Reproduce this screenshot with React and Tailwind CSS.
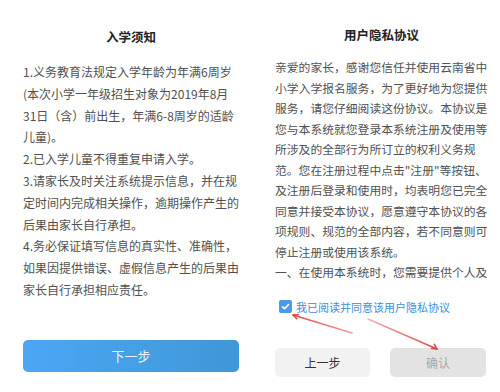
import React from "react";

const notice = [
  ["1.义务教育法规定入学年龄为年满6周岁", "(本次小学一年级招生对象为2019年8月", "31日（含）前出生，年满6-8周岁的适龄", "儿童)。"],
  ["2.已入学儿童不得重复申请入学。"],
  ["3.请家长及时关注系统提示信息，并在规", "定时间内完成相关操作，逾期操作产生的", "后果由家长自行承担。"],
  ["4.务必保证填写信息的真实性、准确性，", "如果因提供错误、虚假信息产生的后果由", "家长自行承担相应责任。"],
];

const privacy = [
  "亲爱的家长，感谢您信任并使用云南省中",
  "小学入学报名服务，为了更好地为您提供",
  "服务，请您仔细阅读这份协议。本协议是",
  "您与本系统就您登录本系统注册及使用等",
  "所涉及的全部行为所订立的权利义务规",
  "范。您在注册过程中点击\"注册\"等按钮、",
  "及注册后登录和使用时，均表明您已完全",
  "同意并接受本协议，愿意遵守本协议的各",
  "项规则、规范的全部内容，若不同意则可",
  "停止注册或使用该系统。",
  "一、在使用本系统时，您需要提供个人及",
];

const font = "font-['Microsoft_YaHei','Noto_Sans_CJK_SC',sans-serif]";

const App = () => {
  return (
    <div className={`relative w-[500px] h-[392px] bg-white flex ${font}`}>
      {/* 入学须知 */}
      <div className="w-[250px] h-full flex flex-col pl-[23px] pr-[11px] pt-[29px] pb-[20px]">
        <h2 className="text-center text-[12.5px] leading-[16px] font-bold text-[#222]">入学须知</h2>
        <div className="mt-[16px] text-[12px] leading-[21.8px] text-[#505050] whitespace-nowrap">
          {notice.map((p, i) => (
            <p key={i}>
              {p.map((line, j) => (
                <span key={j} className="block">{line}</span>
              ))}
            </p>
          ))}
        </div>
        <button className="mt-auto h-[32px] w-full rounded-[5px] bg-gradient-to-r from-[#4ca6f4] to-[#3e98d6] text-[13px] text-[#e9f3fc]">
          下一步
        </button>
      </div>

      {/* 用户隐私协议 */}
      <div className="w-[250px] h-full flex flex-col pl-[25px] pr-[12px] pt-[27px] pb-[15px]">
        <h2 className="text-center text-[12.5px] leading-[16px] font-bold text-[#222]">用户隐私协议</h2>
        <div className="mt-[14px] text-[11.8px] leading-[20.5px] text-[#505050] whitespace-nowrap">
          {privacy.map((line, i) => (
            <span key={i} className="block">{line}</span>
          ))}
        </div>
        <label className="mt-[17px] ml-[4px] flex items-center gap-[4px] text-[11px] leading-[14px] text-[#3b8ee0] whitespace-nowrap">
          <span className="w-[13px] h-[13px] rounded-[2px] bg-[#4d9be8] flex items-center justify-center">
            <svg width="9" height="9" viewBox="0 0 12 12" fill="none" stroke="white" strokeWidth="2" strokeLinecap="round" strokeLinejoin="round">
              <path d="M2 6.5l2.7 2.6L10 3.5" />
            </svg>
          </span>
          我已阅读并同意该用户隐私协议
        </label>
        <div className="mt-auto flex gap-[20px] pr-[2px]">
          <button className="h-[29px] w-[95px] rounded-[5px] bg-[#f2f2f2] text-[12px] text-[#333]">上一步</button>
          <button className="h-[29px] w-[96px] rounded-[5px] bg-[#e3e3e3] text-[12px] text-[#a8a8a8]">确认</button>
        </div>
      </div>

      {/* red annotation arrows */}
      <svg className="absolute inset-0 pointer-events-none" width="500" height="392" viewBox="0 0 500 392">
        <defs>
          <linearGradient id="a1" x1="352" y1="333" x2="292" y2="315" gradientUnits="userSpaceOnUse">
            <stop offset="0" stopColor="#f2a0a0" />
            <stop offset="1" stopColor="#e04848" />
          </linearGradient>
          <linearGradient id="a2" x1="368" y1="319" x2="437" y2="349" gradientUnits="userSpaceOnUse">
            <stop offset="0" stopColor="#f4b4b4" />
            <stop offset="1" stopColor="#e04848" />
          </linearGradient>
        </defs>
        <path d="M352 333L293 315" stroke="url(#a1)" strokeWidth="1.6" strokeLinecap="round" />
        <path d="M293 315l5.5 -0.2 M293 315l3.8 3.8" stroke="#e04848" strokeWidth="1.6" strokeLinecap="round" />
        <path d="M368 319L437 349" stroke="url(#a2)" strokeWidth="1.6" strokeLinecap="round" />
        <path d="M437 349l-5.5 -0.6 M437 349l-2.6 -4.6" stroke="#e04848" strokeWidth="1.6" strokeLinecap="round" />
      </svg>
    </div>
  );
};

export default App;
